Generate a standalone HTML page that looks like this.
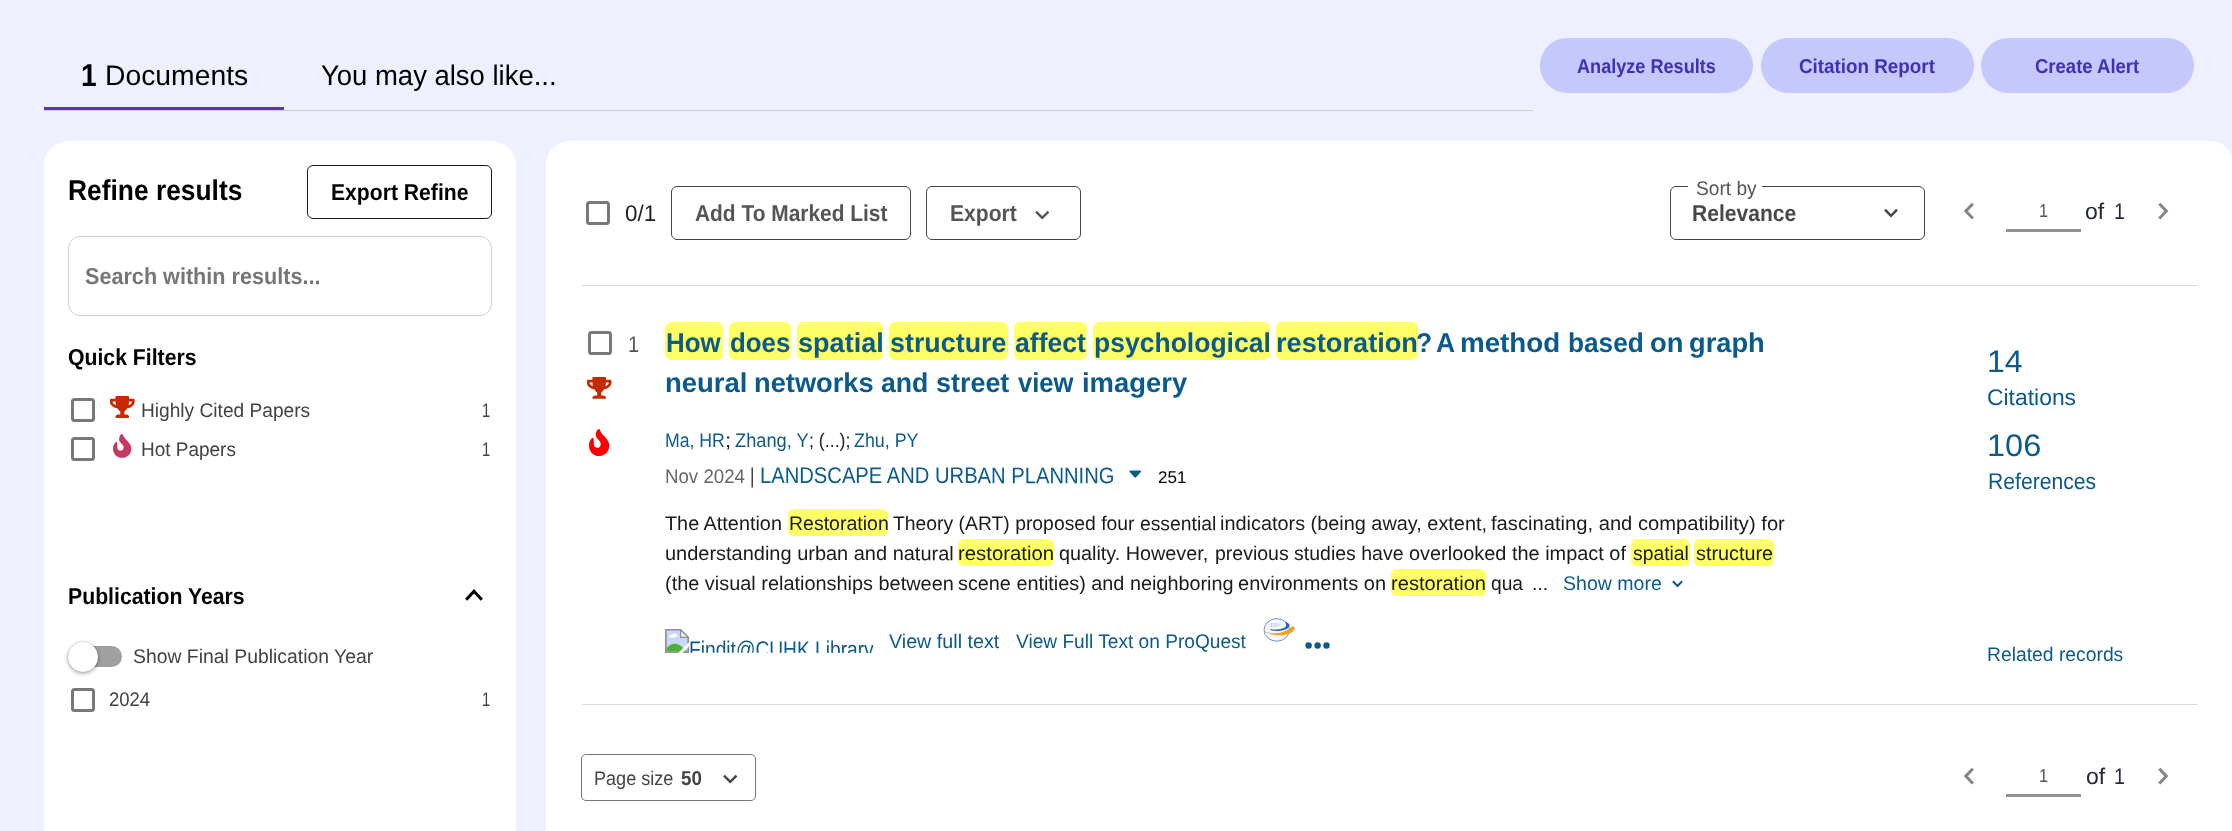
<!DOCTYPE html>
<html lang="en">
<head>
<meta charset="utf-8">
<title>Web of Science - Results</title>
<style>
html,body{margin:0;padding:0;width:2232px;height:831px}
body{background:#eef0ff;font-family:"Liberation Sans",sans-serif;overflow:hidden}
#page{will-change:transform;position:relative;width:2232px;height:831px;overflow:hidden}
#page *{box-sizing:border-box}
.a{position:absolute}
.t{position:absolute;margin:0;padding:0;white-space:nowrap;display:inline-block;transform-origin:0 0;font-family:"Liberation Sans",sans-serif}
.panel{position:absolute;background:#fff;border-radius:24px}
.pill{position:absolute;top:38px;height:55px;border-radius:28px;background:#c4c8fc}
.btn{position:absolute;border:1.5px solid #444;border-radius:6px;background:#fff}
.cb{position:absolute;width:24.2px;height:24.2px;border:3px solid #787878;border-radius:3.5px;background:#fff}
.hl{position:absolute;background:#ffff66;border-radius:6px}
.hr{position:absolute;height:1px;background:#dcdcdc}
svg{position:absolute;overflow:visible}
.g{position:static;display:block;margin:0;padding:0}

</style>
</head>
<body>
<div id="page">
<nav class="g" aria-label="Result tabs">
<div class="a" style="left:44px;top:110px;width:1489px;height:1px;background:#c9cbda"></div>
<div class="a" style="left:44px;top:106.5px;width:240px;height:3.5px;background:#5e33bf"></div>
<span class="t" style="left:80.51px;top:60.00px;font-size:31.5px;line-height:31.5px;font-weight:700;color:#000;transform:scaleX(0.8937) skewY(0.03deg)">1</span>
<span class="t" style="left:105.30px;top:61.00px;font-size:28.3px;line-height:28.3px;font-weight:400;color:#000;transform:scaleX(1.0002) skewY(0.03deg)">Documents</span>
<span class="t" style="left:321.00px;top:61.00px;font-size:28.3px;line-height:28.3px;font-weight:400;color:#000;transform:scaleX(0.9706) skewY(0.03deg)">You may also like...</span>
</nav>
<div class="g" role="toolbar" aria-label="Result actions">
<div class="pill" style="left:1540px;width:213px"></div>
<div class="pill" style="left:1761px;width:213px"></div>
<div class="pill" style="left:1981px;width:213px"></div>
<span class="t" style="left:1577.20px;top:56.00px;font-size:20.1px;line-height:20.1px;font-weight:700;color:#3f30b4;transform:scaleX(0.9010) skewY(0.03deg)">Analyze Results</span>
<span class="t" style="left:1799.10px;top:56.00px;font-size:20.1px;line-height:20.1px;font-weight:700;color:#3f30b4;transform:scaleX(0.9366) skewY(0.03deg)">Citation Report</span>
<span class="t" style="left:2035.20px;top:56.00px;font-size:20.1px;line-height:20.1px;font-weight:700;color:#3f30b4;transform:scaleX(0.9210) skewY(0.03deg)">Create Alert</span>
</div>
<aside class="g" aria-label="Refine results">
<div class="panel" style="left:44px;top:141px;width:472px;height:690px;border-radius:24px 24px 0 0"></div>
<div class="btn" style="left:307px;top:165px;width:185px;height:54px;border-color:#1a1a1a"></div>
<div class="a" style="left:68px;top:236px;width:424px;height:80px;border:1.5px solid #d2d2d2;border-radius:12px;background:#fff"></div>
<div class="cb" style="left:71.25px;top:398.25px"></div>
<div class="cb" style="left:71.25px;top:437px"></div>
<div class="cb" style="left:71.25px;top:687.5px"></div>
<svg style="left:109.6px;top:395.8px" width="24.6" height="21.9" viewBox="0 0 576 512"><path fill="#cb2800" d="M552 64H448V24c0-13.300-10.700-24-24-24H152c-13.300 0-24 10.700-24 24v40H24C10.700 64 0 74.700 0 88v56c0 35.700 22.500 72.400 61.900 100.700 31.500 22.700 69.800 37.100 110 41.700C203.300 338.500 240 360 240 360v72h-48c-35.300 0-64 20.700-64 56v12c0 6.600 5.400 12 12 12h296c6.600 0 12-5.400 12-12v-12c0-35.300-28.700-56-64-56h-48v-72s36.700-21.500 68.100-73.600c40.300-4.600 78.600-19 110-41.700 39.300-28.300 61.900-65 61.900-100.700V88c0-13.300-10.700-24-24-24zM99.300 192.800C74.900 175.200 64 155.600 64 144v-16h64.200c1 32.600 5.800 61.200 12.800 86.200-15.100-5.200-29.200-12.400-41.700-21.400zM512 144c0 16.100-17.700 36.100-35.300 48.800-12.500 9-26.700 16.200-41.800 21.400 7-25 11.800-53.600 12.800-86.200H512v16z"/></svg>
<svg style="left:112.8px;top:434px" width="18.4" height="23.8" viewBox="0 0 423 562" preserveAspectRatio="none"><path fill="#c73860" d="M205,0C225,-3 232,20 240,47C250,80 280,110 325,157C375,210 423,270 423,347C423,470 330,562 205,562C90,562 0,470 0,347C0,280 25,225 60,195C80,180 100,190 100,217L100,317C100,360 135,392 175,392C215,392 245,355 245,310C245,270 215,245 175,205C140,170 130,120 150,70C160,40 180,5 205,0Z"/></svg>
<svg style="left:464.5px;top:587.5px" width="18" height="14" viewBox="0 0 18 14"><path d="M1.2,11.8 L9,3.2 L16.8,11.8" fill="none" stroke="#000" stroke-width="3"/></svg>
<div class="a" style="left:68px;top:646px;width:54px;height:21px;border-radius:10.5px;background:#a0a0a0"></div>
<div class="a" style="left:67.75px;top:641.75px;width:30px;height:30px;border-radius:50%;background:#fff;box-shadow:0 1.5px 4px rgba(0,0,0,.35),0 0 1.5px rgba(0,0,0,.25)"></div>
<h2 class="t" style="left:68.48px;top:176.00px;font-size:28.8px;line-height:28.8px;font-weight:700;color:#000;transform:scaleX(0.9155) skewY(0.03deg)">Refine results</h2>
<span class="t" style="left:330.88px;top:181.00px;font-size:23.0px;line-height:23.0px;font-weight:700;color:#000;transform:scaleX(0.9192) skewY(0.03deg)">Export Refine</span>
<span class="t" style="left:84.80px;top:265.00px;font-size:23.0px;line-height:23.0px;font-weight:700;color:#767676;transform:scaleX(0.9397) skewY(0.03deg)">Search within results...</span>
<h3 class="t" style="left:68.20px;top:346.00px;font-size:23.0px;line-height:23.0px;font-weight:700;color:#000;transform:scaleX(0.9225) skewY(0.03deg)">Quick Filters</h3>
<span class="t" style="left:141.13px;top:401.00px;font-size:19.8px;line-height:19.8px;font-weight:400;color:#424242;transform:scaleX(0.9677) skewY(0.03deg)">Highly Cited Papers</span>
<span class="t" style="left:481.55px;top:401.00px;font-size:19.8px;line-height:19.8px;font-weight:400;color:#424242;transform:scaleX(0.7500) skewY(0.03deg)">1</span>
<span class="t" style="left:141.14px;top:440.00px;font-size:19.8px;line-height:19.8px;font-weight:400;color:#424242;transform:scaleX(0.9586) skewY(0.03deg)">Hot Papers</span>
<span class="t" style="left:481.55px;top:440.00px;font-size:19.8px;line-height:19.8px;font-weight:400;color:#424242;transform:scaleX(0.7500) skewY(0.03deg)">1</span>
<h3 class="t" style="left:67.78px;top:585.00px;font-size:23.0px;line-height:23.0px;font-weight:700;color:#000;transform:scaleX(0.9234) skewY(0.03deg)">Publication Years</h3>
<span class="t" style="left:132.70px;top:647.00px;font-size:19.8px;line-height:19.8px;font-weight:400;color:#424242;transform:scaleX(0.9797) skewY(0.03deg)">Show Final Publication Year</span>
<span class="t" style="left:109.37px;top:690.00px;font-size:19.8px;line-height:19.8px;font-weight:400;color:#424242;transform:scaleX(0.9348) skewY(0.03deg)">2024</span>
<span class="t" style="left:481.55px;top:690.00px;font-size:19.8px;line-height:19.8px;font-weight:400;color:#424242;transform:scaleX(0.7500) skewY(0.03deg)">1</span>
</aside>
<main class="g">
<div class="a" style="left:546px;top:141px;width:1686px;height:690px"><svg style="left:0;top:0;overflow:hidden" width="1686" height="690" viewBox="0 0 1686 690"><rect x="0" y="0" width="1688" height="760" rx="24" ry="24" fill="#fff"/></svg></div>
<header class="g">
<div class="cb" style="left:585.5px;top:201.25px"></div>
<div class="btn" style="left:671px;top:186px;width:239.5px;height:53.5px"></div>
<div class="btn" style="left:925.5px;top:186px;width:155px;height:53.5px"></div>
<svg style="left:1034.5px;top:209.5px" width="14.5" height="10" viewBox="0 0 14.5 10"><path d="M1,1.6 L7.25,7.8 L13.5,1.6" fill="none" stroke="#555" stroke-width="2.5"/></svg>
<div class="btn" style="left:1670px;top:186px;width:254.5px;height:53.5px"></div>
<div class="a" style="left:1687.5px;top:184px;width:74.5px;height:6px;background:#fff"></div>
<svg style="left:1883.5px;top:208px" width="14" height="10" viewBox="0 0 14 10"><path d="M1,1.6 L7,7.8 L13,1.6" fill="none" stroke="#444" stroke-width="2.4"/></svg>
<svg style="left:1962px;top:202px" width="13" height="18" viewBox="0 0 13 18"><path d="M10.9,1.7 L3.8,9.1 L10.9,16.5" fill="none" stroke="#858585" stroke-width="3"/></svg>
<svg style="left:2156px;top:202px" width="13" height="18" viewBox="0 0 13 18"><path d="M3.3,1.7 L10.4,9.1 L3.3,16.5" fill="none" stroke="#858585" stroke-width="3"/></svg>
<div class="a" style="left:2005.5px;top:229px;width:75px;height:3px;background:#929292"></div>
<div class="hr" style="left:582px;top:285px;width:1616px"></div>
<span class="t" style="left:624.60px;top:202.00px;font-size:22.7px;line-height:22.7px;font-weight:400;color:#222;transform:scaleX(0.9864) skewY(0.03deg)">0/1</span>
<span class="t" style="left:695.00px;top:202.00px;font-size:23.0px;line-height:23.0px;font-weight:700;color:#555;transform:scaleX(0.9088) skewY(0.03deg)">Add To Marked List</span>
<span class="t" style="left:949.83px;top:202.00px;font-size:23.0px;line-height:23.0px;font-weight:700;color:#555;transform:scaleX(0.9178) skewY(0.03deg)">Export</span>
<span class="t" style="left:1695.50px;top:179.00px;font-size:19.8px;line-height:19.8px;font-weight:400;color:#555;transform:scaleX(0.9685) skewY(0.03deg)">Sort by</span>
<span class="t" style="left:1691.98px;top:202.00px;font-size:23.0px;line-height:23.0px;font-weight:700;color:#484848;transform:scaleX(0.9160) skewY(0.03deg)">Relevance</span>
<span class="t" style="left:2039.03px;top:202.00px;font-size:18.8px;line-height:18.8px;font-weight:400;color:#555;transform:scaleX(0.8667) skewY(0.03deg)">1</span>
<span class="t" style="left:2085.20px;top:200.00px;font-size:22.7px;line-height:22.7px;font-weight:400;color:#252a3a;transform:scaleX(1.0144) skewY(0.03deg)">of</span>
<span class="t" style="left:2113.84px;top:200.00px;font-size:22.7px;line-height:22.7px;font-weight:400;color:#252a3a;transform:scaleX(0.8636) skewY(0.03deg)">1</span>
</header>
<article class="g">
<div class="cb" style="left:588.25px;top:331.25px"></div>
<svg style="left:586.7px;top:377.3px" width="24.4" height="21.9" viewBox="0 0 576 512"><path fill="#c52a00" d="M552 64H448V24c0-13.300-10.700-24-24-24H152c-13.300 0-24 10.700-24 24v40H24C10.700 64 0 74.700 0 88v56c0 35.700 22.500 72.400 61.900 100.700 31.500 22.700 69.800 37.100 110 41.700C203.300 338.500 240 360 240 360v72h-48c-35.300 0-64 20.700-64 56v12c0 6.600 5.400 12 12 12h296c6.600 0 12-5.400 12-12v-12c0-35.300-28.700-56-64-56h-48v-72s36.700-21.500 68.100-73.600c40.300-4.600 78.600-19 110-41.700 39.300-28.300 61.900-65 61.900-100.700V88c0-13.300-10.700-24-24-24zM99.300 192.800C74.900 175.200 64 155.600 64 144v-16h64.200c1 32.600 5.800 61.200 12.800 86.200-15.100-5.200-29.200-12.400-41.700-21.400zM512 144c0 16.100-17.700 36.100-35.300 48.800-12.500 9-26.700 16.200-41.800 21.400 7-25 11.800-53.600 12.800-86.200H512v16z"/></svg>
<svg style="left:589px;top:428.9px" width="20.3" height="27" viewBox="0 0 423 562" preserveAspectRatio="none"><path fill="#ff0000" d="M205,0C225,-3 232,20 240,47C250,80 280,110 325,157C375,210 423,270 423,347C423,470 330,562 205,562C90,562 0,470 0,347C0,280 25,225 60,195C80,180 100,190 100,217L100,317C100,360 135,392 175,392C215,392 245,355 245,310C245,270 215,245 175,205C140,170 130,120 150,70C160,40 180,5 205,0Z"/></svg>
<!-- title highlights -->
<div class="hl" style="left:665px;top:322px;width:58px;height:38px"></div>
<div class="hl" style="left:729px;top:322px;width:61.5px;height:38px"></div>
<div class="hl" style="left:796.75px;top:322px;width:85.75px;height:38px"></div>
<div class="hl" style="left:888.75px;top:322px;width:118.75px;height:38px"></div>
<div class="hl" style="left:1013.5px;top:322px;width:73.5px;height:38px"></div>
<div class="hl" style="left:1093px;top:322px;width:177px;height:38px"></div>
<div class="hl" style="left:1275.75px;top:322px;width:141.75px;height:38px"></div>
<!-- journal caret -->
<svg style="left:1128.75px;top:470px" width="12.5" height="8" viewBox="0 0 12.5 8"><path d="M1.2,0.6 H11.3 Q12.6,0.8 11.8,1.9 L7.1,7.3 Q6.25,8.1 5.4,7.3 L0.7,1.9 Q-0.1,0.8 1.2,0.6Z" fill="#0b5a8c"/></svg>
<!-- abstract highlights -->
<div class="hl" style="left:788.25px;top:509px;width:100px;height:26.75px"></div>
<div class="hl" style="left:957.5px;top:539.25px;width:96.75px;height:26.5px"></div>
<div class="hl" style="left:1631px;top:539.25px;width:58.5px;height:26.5px"></div>
<div class="hl" style="left:1694px;top:539.25px;width:79.75px;height:26.5px"></div>
<div class="hl" style="left:1390.75px;top:569.25px;width:95.5px;height:26.5px"></div>
<svg style="left:1671.5px;top:579.5px" width="11" height="8" viewBox="0 0 11 8"><path d="M0.9,1.3 L5.5,6 L10.1,1.3" fill="none" stroke="#0b5a8c" stroke-width="2"/></svg>
<!-- links row: broken image with alt text -->
<div class="a" style="left:665px;top:629px;width:212px;height:23.8px;overflow:hidden">
  <svg style="left:0;top:0" width="24" height="24" viewBox="0 0 24 24">
    <path d="M0.8,0.8 H15.6 L23.2,8.4 V23.2 H0.8Z" fill="#c7d7f7" stroke="#8f8f8f" stroke-width="1.6"/>
    <path d="M15.6,0.8 V8.4 H23.2Z" fill="#f1f1f1" stroke="#8f8f8f" stroke-width="1.2"/>
    <ellipse cx="9" cy="6.6" rx="3.4" ry="1.9" fill="#fff"/>
    <ellipse cx="6.6" cy="7.4" rx="2.6" ry="1.3" fill="#fff"/>
    <path d="M1.6,22.4 V19 Q6,14.2 10.4,14.8 Q15,15.5 18.4,19.4 L22.4,22.4Z" fill="#4caf3c"/>
    <path d="M13.2,24 L24,13.2 V17.4 L17.4,24Z" fill="#fff"/>
  </svg>
</div>
<!-- ISI icon -->
<svg style="left:1261px;top:616px" width="36" height="28" viewBox="0 0 36 28">
  <ellipse cx="15.8" cy="13.9" rx="12.7" ry="11.3" fill="#f5f6fa" stroke="#7094d2" stroke-width="1"/>
  <text x="9.4" y="11.3" font-family="Liberation Serif, serif" font-size="5.6" fill="#a9bfe4">ISI®</text>
  <path d="M24.5,5.7 C27.5,6.8 29,8.5 28.4,9.9 C27.5,12.3 25,13.5 22.7,13.9 C19,14.9 16,15 13.1,14.8 C11,14.5 9.3,13.8 8.3,12.8 C10.5,13.3 13,13.7 16.1,13.6 C19,13.4 21,13 22.7,12.1 C24.5,11.2 25.4,10.2 25.1,9 C25,8 24.8,7 24.2,6.3Z" fill="#2c5db4"/>
  <path d="M1,14.3 C6,17 11,17.6 16,17.2 C22,16.8 27,14 31,10.2 C32.5,10 33.8,11 33.8,12.7 C33,14.5 31,16.5 28,17.7 C24,19.4 20,19.3 16,19 C10,18.6 5,17 1,14.3Z" fill="#f0a31e"/>
</svg>
<svg style="left:1305.1px;top:641.9px" width="26" height="7" viewBox="0 0 26 7"><circle cx="3.6" cy="3.5" r="3.2" fill="#0b5a8c"/><circle cx="12.6" cy="3.5" r="3.2" fill="#0b5a8c"/><circle cx="21.5" cy="3.5" r="3.2" fill="#0b5a8c"/></svg>
<div class="hr" style="left:582px;top:704px;width:1616px"></div>
<span class="t" style="left:628.02px;top:333.00px;font-size:22.7px;line-height:22.7px;font-weight:400;color:#555;transform:scaleX(0.8818) skewY(0.03deg)">1</span>
<a class="t" style="left:665.95px;top:329.00px;font-size:27.3px;line-height:27.3px;font-weight:700;color:#0b5a8c;transform:scaleX(0.9480) skewY(0.03deg)">How</a>
<a class="t" style="left:729.65px;top:329.00px;font-size:27.3px;line-height:27.3px;font-weight:700;color:#0b5a8c;transform:scaleX(0.9468) skewY(0.03deg)">does</a>
<a class="t" style="left:798.00px;top:329.00px;font-size:27.3px;line-height:27.3px;font-weight:700;color:#0b5a8c;transform:scaleX(0.9919) skewY(0.03deg)">spatial</a>
<a class="t" style="left:890.00px;top:329.00px;font-size:27.3px;line-height:27.3px;font-weight:700;color:#0b5a8c;transform:scaleX(0.9845) skewY(0.03deg)">structure</a>
<a class="t" style="left:1015.00px;top:329.00px;font-size:27.3px;line-height:27.3px;font-weight:700;color:#0b5a8c;transform:scaleX(0.9735) skewY(0.03deg)">affect</a>
<a class="t" style="left:1093.53px;top:329.00px;font-size:27.3px;line-height:27.3px;font-weight:700;color:#0b5a8c;transform:scaleX(0.9713) skewY(0.03deg)">psychological</a>
<a class="t" style="left:1276.00px;top:329.00px;font-size:27.3px;line-height:27.3px;font-weight:700;color:#0b5a8c;transform:scaleX(0.9957) skewY(0.03deg)">restoration</a>
<a class="t" style="left:1416.05px;top:329.00px;font-size:27.3px;line-height:27.3px;font-weight:700;color:#0b5a8c;transform:scaleX(0.9700) skewY(0.03deg)">?</a>
<a class="t" style="left:1436.41px;top:329.00px;font-size:27.3px;line-height:27.3px;font-weight:700;color:#0b5a8c;transform:scaleX(0.9700) skewY(0.03deg)">A</a>
<a class="t" style="left:1460.23px;top:329.00px;font-size:27.3px;line-height:27.3px;font-weight:700;color:#0b5a8c;transform:scaleX(1.0168) skewY(0.03deg)">method</a>
<a class="t" style="left:1567.79px;top:329.00px;font-size:27.3px;line-height:27.3px;font-weight:700;color:#0b5a8c;transform:scaleX(0.9611) skewY(0.03deg)">based</a>
<a class="t" style="left:1650.25px;top:329.00px;font-size:27.3px;line-height:27.3px;font-weight:700;color:#0b5a8c;transform:scaleX(1.0025) skewY(0.03deg)">on</a>
<a class="t" style="left:1689.00px;top:329.00px;font-size:27.3px;line-height:27.3px;font-weight:700;color:#0b5a8c;transform:scaleX(0.9979) skewY(0.03deg)">graph</a>
<a class="t" style="left:665.39px;top:369.00px;font-size:27.3px;line-height:27.3px;font-weight:700;color:#0b5a8c;transform:scaleX(1.0065) skewY(0.03deg)">neural</a>
<a class="t" style="left:753.50px;top:369.00px;font-size:27.3px;line-height:27.3px;font-weight:700;color:#0b5a8c;transform:scaleX(0.9987) skewY(0.03deg)">networks</a>
<a class="t" style="left:881.25px;top:369.00px;font-size:27.3px;line-height:27.3px;font-weight:700;color:#0b5a8c;transform:scaleX(0.9764) skewY(0.03deg)">and</a>
<a class="t" style="left:935.50px;top:369.00px;font-size:27.3px;line-height:27.3px;font-weight:700;color:#0b5a8c;transform:scaleX(0.9864) skewY(0.03deg)">street</a>
<a class="t" style="left:1017.50px;top:369.00px;font-size:27.3px;line-height:27.3px;font-weight:700;color:#0b5a8c;transform:scaleX(0.9383) skewY(0.03deg)">view</a>
<a class="t" style="left:1081.50px;top:369.00px;font-size:27.3px;line-height:27.3px;font-weight:700;color:#0b5a8c;transform:scaleX(1.0046) skewY(0.03deg)">imagery</a>
<a class="t" style="left:664.81px;top:431.00px;font-size:19.8px;line-height:19.8px;font-weight:400;color:#0b5a8c;transform:scaleX(0.8927) skewY(0.03deg)">Ma, HR</a>
<span class="t" style="left:724.77px;top:431.00px;font-size:19.8px;line-height:19.8px;font-weight:400;color:#222;transform:scaleX(1.1333) skewY(0.03deg)">;</span>
<a class="t" style="left:734.90px;top:431.00px;font-size:19.8px;line-height:19.8px;font-weight:400;color:#0b5a8c;transform:scaleX(0.9216) skewY(0.03deg)">Zhang, Y</a>
<span class="t" style="left:809.00px;top:431.00px;font-size:19.8px;line-height:19.8px;font-weight:400;color:#222;transform:scaleX(0.8980) skewY(0.03deg)">; (...);</span>
<a class="t" style="left:853.50px;top:431.00px;font-size:19.8px;line-height:19.8px;font-weight:400;color:#0b5a8c;transform:scaleX(0.9022) skewY(0.03deg)">Zhu, PY</a>
<span class="t" style="left:664.76px;top:467.00px;font-size:19.8px;line-height:19.8px;font-weight:400;color:#666;transform:scaleX(0.9441) skewY(0.03deg)">Nov 2024</span>
<span class="t" style="left:749.90px;top:466.00px;font-size:21.5px;line-height:21.5px;font-weight:400;color:#333;transform:scaleX(0.8000) skewY(0.03deg)">|</span>
<a class="t" style="left:760.11px;top:464.00px;font-size:22.7px;line-height:22.7px;font-weight:400;color:#0b5a8c;transform:scaleX(0.8897) skewY(0.03deg)">LANDSCAPE AND URBAN PLANNING</a>
<span class="t" style="left:1158.25px;top:469.00px;font-size:17.0px;line-height:17.0px;font-weight:400;color:#000;transform:scaleX(1.0033) skewY(0.03deg)">251</span>
<span class="t" style="left:665.30px;top:514.00px;font-size:19.8px;line-height:19.8px;font-weight:400;color:#1a1a1a;transform:scaleX(1.0029) skewY(0.03deg)">The Attention</span>
<span class="t" style="left:788.51px;top:514.00px;font-size:19.8px;line-height:19.8px;font-weight:400;color:#1a1a1a;transform:scaleX(0.9863) skewY(0.03deg)">Restoration</span>
<span class="t" style="left:893.40px;top:514.00px;font-size:19.8px;line-height:19.8px;font-weight:400;color:#1a1a1a;transform:scaleX(0.9778) skewY(0.03deg)">Theory (ART) proposed four essential</span>
<span class="t" style="left:1220.25px;top:514.00px;font-size:19.8px;line-height:19.8px;font-weight:400;color:#1a1a1a;transform:scaleX(1.0048) skewY(0.03deg)">indicators (being away, extent,</span>
<span class="t" style="left:1491.25px;top:514.00px;font-size:19.8px;line-height:19.8px;font-weight:400;color:#1a1a1a;transform:scaleX(1.0200) skewY(0.03deg)">fascinating, and compatibility) for</span>
<span class="t" style="left:664.69px;top:544.00px;font-size:19.8px;line-height:19.8px;font-weight:400;color:#1a1a1a;transform:scaleX(1.0096) skewY(0.03deg)">understanding urban and natural</span>
<span class="t" style="left:957.97px;top:544.00px;font-size:19.8px;line-height:19.8px;font-weight:400;color:#1a1a1a;transform:scaleX(1.0278) skewY(0.03deg)">restoration</span>
<span class="t" style="left:1058.75px;top:544.00px;font-size:19.8px;line-height:19.8px;font-weight:400;color:#1a1a1a;transform:scaleX(1.0006) skewY(0.03deg)">quality. However,</span>
<span class="t" style="left:1214.51px;top:544.00px;font-size:19.8px;line-height:19.8px;font-weight:400;color:#1a1a1a;transform:scaleX(0.9851) skewY(0.03deg)">previous studies have</span>
<span class="t" style="left:1408.75px;top:544.00px;font-size:19.8px;line-height:19.8px;font-weight:400;color:#1a1a1a;transform:scaleX(1.0068) skewY(0.03deg)">overlooked the impact of</span>
<span class="t" style="left:1632.50px;top:544.00px;font-size:19.8px;line-height:19.8px;font-weight:400;color:#1a1a1a;transform:scaleX(0.9774) skewY(0.03deg)">spatial</span>
<span class="t" style="left:1695.50px;top:544.00px;font-size:19.8px;line-height:19.8px;font-weight:400;color:#1a1a1a;transform:scaleX(1.0006) skewY(0.03deg)">structure</span>
<span class="t" style="left:664.69px;top:574.00px;font-size:19.8px;line-height:19.8px;font-weight:400;color:#1a1a1a;transform:scaleX(1.0063) skewY(0.03deg)">(the visual relationships between</span>
<span class="t" style="left:958.00px;top:574.00px;font-size:19.8px;line-height:19.8px;font-weight:400;color:#1a1a1a;transform:scaleX(1.0021) skewY(0.03deg)">scene entities) and neighboring</span>
<span class="t" style="left:1238.00px;top:574.00px;font-size:19.8px;line-height:19.8px;font-weight:400;color:#1a1a1a;transform:scaleX(1.0121) skewY(0.03deg)">environments on</span>
<span class="t" style="left:1390.98px;top:574.00px;font-size:19.8px;line-height:19.8px;font-weight:400;color:#1a1a1a;transform:scaleX(1.0169) skewY(0.03deg)">restoration</span>
<span class="t" style="left:1491.25px;top:574.00px;font-size:19.8px;line-height:19.8px;font-weight:400;color:#1a1a1a;transform:scaleX(0.9696) skewY(0.03deg)">qua</span>
<span class="t" style="left:1531.52px;top:574.00px;font-size:19.8px;line-height:19.8px;font-weight:400;color:#1a1a1a;transform:scaleX(0.9827) skewY(0.03deg)">...</span>
<a class="t" style="left:1563.25px;top:574.00px;font-size:19.8px;line-height:19.8px;font-weight:400;color:#0b5a8c;transform:scaleX(0.9871) skewY(0.03deg)">Show more</a>
<a class="t" style="left:689.15px;top:638.00px;font-size:22.7px;line-height:22.7px;font-weight:400;color:#0b5a8c;transform:scaleX(0.8455) skewY(0.03deg);clip-path:inset(0 0 7.90px 0)">Findit@CUHK Library</a>
<a class="t" style="left:889.25px;top:632.00px;font-size:19.8px;line-height:19.8px;font-weight:400;color:#0b5a8c;transform:scaleX(0.9961) skewY(0.03deg)">View full text</a>
<a class="t" style="left:1015.50px;top:632.00px;font-size:19.8px;line-height:19.8px;font-weight:400;color:#0b5a8c;transform:scaleX(0.9666) skewY(0.03deg)">View Full Text on ProQuest</a>
<a class="t" style="left:1987.24px;top:346.00px;font-size:31.2px;line-height:31.2px;font-weight:400;color:#0b5a8c;transform:scaleX(1.0295) skewY(0.03deg)">14</a>
<a class="t" style="left:1987.49px;top:386.00px;font-size:22.7px;line-height:22.7px;font-weight:400;color:#0b5a8c;transform:scaleX(1.0089) skewY(0.03deg)">Citations</a>
<a class="t" style="left:1987.21px;top:430.00px;font-size:31.2px;line-height:31.2px;font-weight:400;color:#0b5a8c;transform:scaleX(1.0433) skewY(0.03deg)">106</a>
<a class="t" style="left:1988.37px;top:470.00px;font-size:22.7px;line-height:22.7px;font-weight:400;color:#0b5a8c;transform:scaleX(0.9313) skewY(0.03deg)">References</a>
<a class="t" style="left:1987.02px;top:645.00px;font-size:19.8px;line-height:19.8px;font-weight:400;color:#0b5a8c;transform:scaleX(0.9759) skewY(0.03deg)">Related records</a>
</article>
<footer class="g">
<div class="btn" style="left:581px;top:753.75px;width:175.25px;height:47.5px;border-color:#777;border-radius:5px"></div>
<svg style="left:722.5px;top:773.8px" width="14.5" height="10" viewBox="0 0 14.5 10"><path d="M1,1.6 L7.25,7.8 L13.5,1.6" fill="none" stroke="#444" stroke-width="2.4"/></svg>
<svg style="left:1962.3px;top:767px" width="13" height="18" viewBox="0 0 13 18"><path d="M10.9,1.7 L3.8,9.1 L10.9,16.5" fill="none" stroke="#858585" stroke-width="3"/></svg>
<svg style="left:2156.3px;top:767px" width="13" height="18" viewBox="0 0 13 18"><path d="M3.3,1.7 L10.4,9.1 L3.3,16.5" fill="none" stroke="#858585" stroke-width="3"/></svg>
<div class="a" style="left:2006px;top:794px;width:75px;height:3px;background:#929292"></div>

<span class="t" style="left:593.59px;top:769.00px;font-size:19.8px;line-height:19.8px;font-weight:400;color:#444;transform:scaleX(0.9142) skewY(0.03deg)">Page size</span>
<span class="t" style="left:681.25px;top:768.00px;font-size:20.1px;line-height:20.1px;font-weight:700;color:#444;transform:scaleX(0.9357) skewY(0.03deg)">50</span>
<span class="t" style="left:2039.33px;top:767.00px;font-size:18.8px;line-height:18.8px;font-weight:400;color:#555;transform:scaleX(0.8667) skewY(0.03deg)">1</span>
<span class="t" style="left:2085.50px;top:765.00px;font-size:22.7px;line-height:22.7px;font-weight:400;color:#252a3a;transform:scaleX(1.0144) skewY(0.03deg)">of</span>
<span class="t" style="left:2114.14px;top:765.00px;font-size:22.7px;line-height:22.7px;font-weight:400;color:#252a3a;transform:scaleX(0.8636) skewY(0.03deg)">1</span>
</footer>
</main>

</div>
</body>
</html>
